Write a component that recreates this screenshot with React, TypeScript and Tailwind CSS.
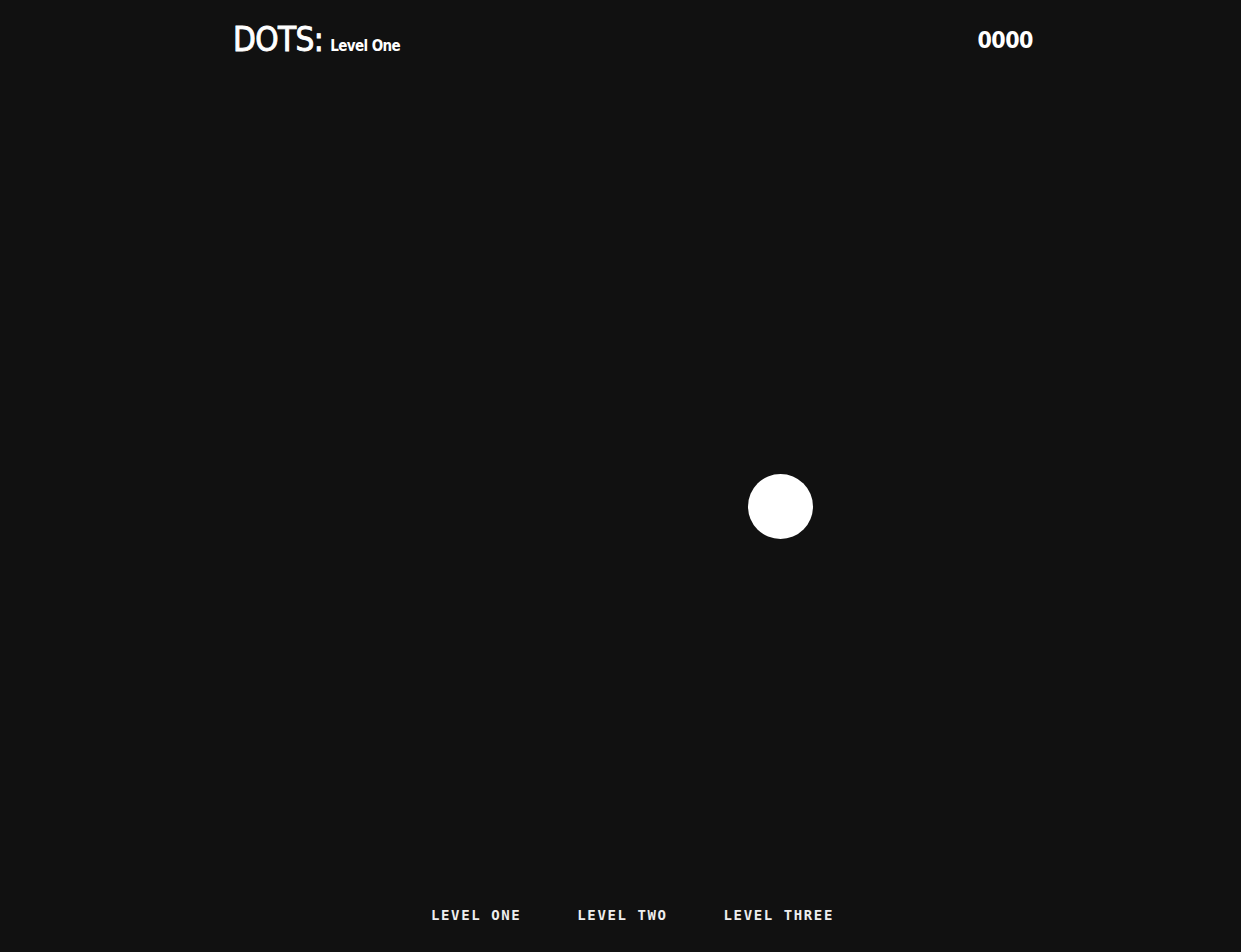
import React from 'react';

const levels = ['LEVEL ONE', 'LEVEL TWO', 'LEVEL THREE'];

export default function App() {
  return (
    <div className="relative flex h-[952px] w-full flex-col bg-[#111111] text-white">
      <header className="flex items-start justify-between pl-[233px] pr-[208px] pt-[20px]">
        <h1 className="flex items-baseline gap-[7px] font-['DejaVu_Sans_Condensed','DejaVu_Sans',sans-serif] text-[33px] leading-[40px] tracking-[-0.6px] [-webkit-text-stroke:0.9px_white]">
          DOTS:
          <span className="text-[15px] font-bold tracking-[-0.6px] [-webkit-text-stroke:0px]">Level One</span>
        </h1>
        <div className="font-['DejaVu_Sans_Condensed','DejaVu_Sans',sans-serif] text-[23px] font-bold leading-[40px] tracking-[-0.5px]">
          0000
        </div>
      </header>

      <main className="relative flex-1">
        {/* the dot sits on the free canvas */}
        <div className="absolute left-[748px] top-[408px] h-[65px] w-[65px] rounded-full bg-white" />
      </main>

      <nav className="flex justify-center gap-[56px] pb-[29px] pl-[24px]">
        {levels.map(l => (
          <button
            key={l}
            className="font-['DejaVu_Sans_Mono',monospace] text-[14px] font-bold leading-[16px] tracking-[1.6px] text-[#eeeeee]"
          >
            {l}
          </button>
        ))}
      </nav>
    </div>
  );
}
